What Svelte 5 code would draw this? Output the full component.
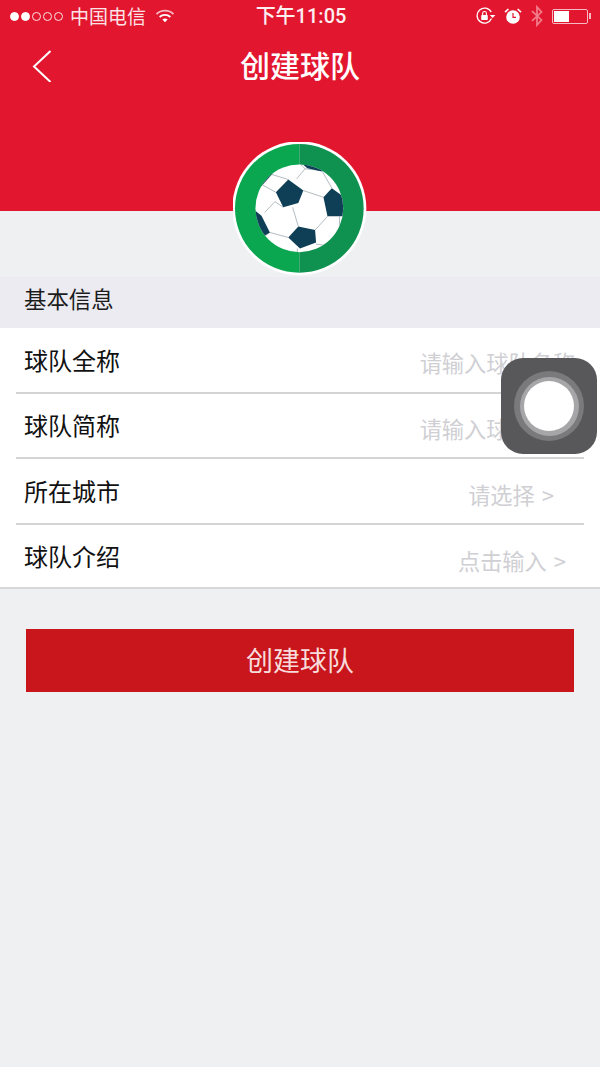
<script>
	const rows = [
		{ label: '球队全称', hint: '请输入球队名称', inset: 'far' },
		{ label: '球队简称', hint: '请输入球队简称', inset: 'far' },
		{ label: '所在城市', hint: '请选择 >', inset: 'near' },
		{ label: '球队介绍', hint: '点击输入 >', inset: 'mid' }
	];
</script>

<div class="page">
	<header class="top">
		<div class="status">
			<div class="status__side">
				<span class="dots">
					<i class="on"></i><i class="on"></i><i></i><i></i><i></i>
				</span>
				<span class="carrier">中国电信</span>
				<svg class="wifi" width="20" height="14" viewBox="0 0 20 14">
					<path d="M1.5 5.2a12 12 0 0 1 17 0" fill="none" stroke="#f6b9c2" stroke-width="1.7" />
					<path d="M4.6 8a7.8 7.8 0 0 1 10.8 0" fill="none" stroke="#fff" stroke-width="1.8" />
					<path d="M7.4 10.6a3.8 3.8 0 0 1 5.2 0L10 13.2z" fill="#fff" />
				</svg>
			</div>
			<span class="time">下午11:05</span>
			<div class="status__side status__side--right">
				<svg class="lock" width="20" height="18" viewBox="0 0 20 18">
					<path d="M15.5 11.5A7.5 7.5 0 1 1 15.2 5" fill="none" stroke="#fff" stroke-width="1.3" />
					<path d="M13.8 8h5.6l-2.8 3z" fill="#fff" />
					<rect x="5.2" y="8" width="6.6" height="5" rx="0.8" fill="#fff" />
					<path d="M6.6 8V6.4a1.9 1.9 0 0 1 3.8 0V8" fill="none" stroke="#fff" stroke-width="1.1" />
				</svg>
				<svg class="alarm" width="18" height="18" viewBox="0 0 18 18">
					<circle cx="9" cy="10" r="6.8" fill="#fff" />
					<path d="M9 6v4.4h3" fill="none" stroke="#e2172f" stroke-width="1.2" />
					<path d="M1 5.2 4.4 2M17 5.2 13.6 2" stroke="#fff" stroke-width="1.6" />
				</svg>
				<svg class="bt" width="14" height="22" viewBox="0 0 14 22">
					<path d="M2 6.2 11.5 15 7 20V2l4.5 5L2 15.8" fill="none" stroke="#f27f8e" stroke-width="1.7" />
				</svg>
				<div class="battery"><div class="battery__level"></div></div>
				<span class="battery__tip"></span>
			</div>
		</div>

		<div class="nav">
			<svg class="back" width="20" height="32" viewBox="0 0 20 32">
				<path d="M18.5 1 2 16.5 18.5 32" fill="none" stroke="#fff" stroke-width="2" />
			</svg>
			<h1>创建球队</h1>
		</div>

		<svg class="logo" width="134" height="134" viewBox="40 40 400 400">
			<defs>
				<clipPath id="ball"><circle cx="238" cy="238" r="131" /></clipPath>
			</defs>
			<circle cx="238" cy="238" r="200" fill="#fff" />
			<path d="M238 46a192 192 0 0 0 0 384z" fill="#0aa650" />
			<path d="M238 46a192 192 0 0 1 0 384z" fill="#0f9150" />
			<circle cx="238" cy="238" r="131" fill="#fff" />
			<g clip-path="url(#ball)">
				<g fill="none" stroke="#8b9aa2" stroke-width="2">
					<path d="M205 152 150 135M230 150 255 120 305 125 335 178M255 120 240 105" />
					<path d="M250 185 310 205M218 235 235 292M190 235 165 218 135 250" />
					<path d="M128 168 168 190M322 262 285 303M150 310 205 325" />
					<path d="M288 345 330 350M232 358 232 375M358 262 358 300M150 310 135 320" />
				</g>
				<g fill="#0e3f56">
					<path d="M168 190 205 152 250 185 235 222 190 235z" />
					<path d="M310 205 335 178 372 205 368 262 322 262z" />
					<path d="M205 325 235 292 285 303 288 340 240 358z" />
					<path d="M100 240 125 260 150 310 130 322 100 290z" />
					<path d="M240 100 310 110 305 128 262 118z" />
					<path d="M120 175 150 130 158 135 128 168z" />
				</g>
			</g>
		</svg>
	</header>

	<div class="spacer"></div>
	<div class="band">基本信息</div>

	<section class="form">
		{#each rows as row}
			<div class="row">
				<span class="row__label">{row.label}</span>
				<span class="row__hint row__hint--{row.inset}">{row.hint}</span>
			</div>
		{/each}
	</section>

	<button class="submit">创建球队</button>

	<div class="touch">
		<div class="touch__outer">
			<div class="touch__mid">
				<div class="touch__dot"></div>
			</div>
		</div>
	</div>
</div>

<style>
	:global(body) {
		margin: 0;
		background: #eff0f2;
	}

	.page {
		position: relative;
		width: 600px;
		height: 1067px;
		overflow: hidden;
		background: #eff0f2;
		font-family: 'Noto Sans CJK SC', 'Noto Sans', sans-serif;
	}

	.top {
		position: relative;
		height: 211px;
		background: #e2172f;
		color: #fff;
	}

	.status {
		display: flex;
		justify-content: space-between;
		align-items: center;
		height: 32px;
		padding: 0 9px 0 10px;
	}

	.status__side {
		display: flex;
		align-items: center;
		width: 190px;
	}

	.status__side--right {
		justify-content: flex-end;
		gap: 8px;
	}

	.dots {
		display: flex;
		gap: 2px;
	}

	.dots i {
		box-sizing: border-box;
		width: 9px;
		height: 9px;
		border: 1px solid #fbe3e6;
		border-radius: 50%;
	}

	.dots i.on {
		background: #fff;
		border-color: #fff;
	}

	.carrier {
		margin-left: 7px;
		font-size: 19px;
		line-height: 32px;
		color: #fbe3e6;
	}

	.wifi {
		margin-left: 9px;
	}

	.time {
		padding: 1px 0 0 1px;
		font-family: Roboto, 'Noto Sans CJK SC', sans-serif;
		font-size: 20px;
		font-weight: 500;
		line-height: 31px;
		color: #fdeef0;
	}

	.battery {
		box-sizing: border-box;
		width: 36px;
		height: 15px;
		padding: 1px;
		border: 1px solid #f6b9c2;
		border-radius: 2px;
	}

	.battery__level {
		width: 15px;
		height: 100%;
		background: #fff;
	}

	.battery__tip {
		width: 2px;
		height: 6px;
		margin-left: -7px;
		background: #f6b9c2;
	}

	.nav {
		position: relative;
		display: flex;
		justify-content: center;
		align-items: center;
		height: 64px;
		padding-bottom: 4px;
	}

	.nav h1 {
		margin: 0;
		font-size: 30px;
		font-weight: 500;
		line-height: 64px;
	}

	.back {
		position: absolute;
		left: 32px;
		top: 18px;
	}

	.logo {
		position: absolute;
		left: 233px;
		top: 142px;
	}

	.spacer {
		height: 66px;
	}

	.band {
		height: 51px;
		padding-left: 24px;
		background: #ebebf1;
		font-size: 22.4px;
		line-height: 43px;
		color: #1c1c1c;
	}

	.form {
		background: #fff;
		border-bottom: 2px solid #d8d8d8;
	}

	.row {
		box-sizing: border-box;
		display: flex;
		justify-content: space-between;
		align-items: center;
		height: 65.5px;
		margin: 0 16px;
		padding: 0 8px;
		border-bottom: 2px solid #d4d4d4;
	}

	.row:last-child {
		height: 62px;
		border-bottom: 0;
	}

	.row__label {
		padding-bottom: 1px;
		font-size: 24px;
		color: #111;
	}

	.row__hint {
		padding-top: 5px;
		font-size: 22.2px;
		word-spacing: 2px;
		color: #cfcfd4;
	}

	.row__hint--far {
		margin-right: 1px;
	}

	.row__hint--near {
		margin-right: 22px;
		padding-top: 7px;
	}

	.row__hint--mid {
		margin-right: 10px;
		padding-top: 8px;
	}

	.submit {
		display: block;
		width: 548px;
		height: 63px;
		margin: 40px 0 0 26px;
		padding: 0 0 2px;
		border: 0;
		border-radius: 0;
		background: #c8161c;
		color: #f8dcdc;
		font-family: inherit;
		font-size: 27px;
	}

	.touch {
		position: absolute;
		left: 501px;
		top: 358px;
		display: flex;
		justify-content: center;
		align-items: center;
		width: 96px;
		height: 96px;
		border-radius: 22px;
		background: #58585a;
	}

	.touch__outer {
		display: flex;
		justify-content: center;
		align-items: center;
		width: 70px;
		height: 70px;
		border-radius: 50%;
		background: #7a7a7c;
	}

	.touch__mid {
		display: flex;
		justify-content: center;
		align-items: center;
		width: 59px;
		height: 59px;
		border-radius: 50%;
		background: #a6a6a8;
	}

	.touch__dot {
		width: 50px;
		height: 50px;
		border-radius: 50%;
		background: #fff;
	}
</style>
